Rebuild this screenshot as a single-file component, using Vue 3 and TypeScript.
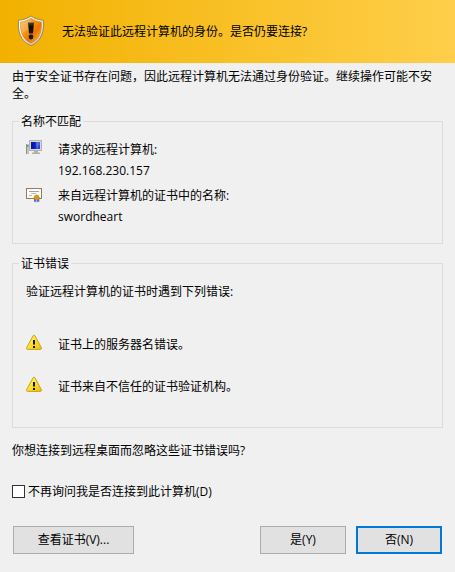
<script setup lang="ts">
import { ref } from 'vue'

const dontAskAgain = ref<boolean>(false)
const errors: string[] = ['证书上的服务器名错误。', '证书来自不信任的证书验证机构。']
</script>

<template>
  <main class="dialog" lang="zh-CN">
    <header class="banner">
      <svg class="shield" width="28" height="32" viewBox="0 0 28 32">
        <defs>
          <linearGradient id="rim" x1="0" y1="0" x2="1" y2="1">
            <stop offset="0" stop-color="#ffffff" />
            <stop offset="0.5" stop-color="#f0ede6" />
            <stop offset="1" stop-color="#c4bfb5" />
          </linearGradient>
          <linearGradient id="core" x1="0" y1="0" x2="1" y2="1">
            <stop offset="0" stop-color="#ffb94e" />
            <stop offset="0.45" stop-color="#f28c0c" />
            <stop offset="0.62" stop-color="#ea7400" />
            <stop offset="1" stop-color="#ffc13c" />
          </linearGradient>
          <linearGradient id="mark" x1="0" y1="0" x2="0" y2="1">
            <stop offset="0" stop-color="#4a463f" />
            <stop offset="0.4" stop-color="#0c0a07" />
            <stop offset="1" stop-color="#1c150c" />
          </linearGradient>
        </defs>
        <path d="M14 1C10.500 3.600 6.300 4.800 1.500 5.300C.8 15.500 2.500 25.500 14 30.600C25.500 25.500 27.200 15.500 26.500 5.300C21.700 4.800 17.500 3.600 14 1Z" fill="url(#rim)" stroke="#8d7546" stroke-width=".8" />
        <path d="M14 3.300C11 5.300 7.500 6.500 3.600 7C3.100 15.800 4.800 24.200 14 28.500C23.200 24.200 24.900 15.800 24.400 7C20.500 6.500 17 5.300 14 3.300Z" fill="url(#core)" stroke="#c98736" stroke-width=".5" />
        <path d="M4 7.300C7.800 6.800 11.200 5.800 14 3.900V15C10 15 7 16.500 5 19C4.200 15.500 3.900 11.500 4 7.300Z" fill="#fff" opacity=".18" />
        <path d="M11 7.500h6l-1 11h-4Z" fill="url(#mark)" />
        <circle cx="14" cy="22" r="2.400" fill="#1f1810" />
      </svg>
      <h1 class="title">无法验证此远程计算机的身份。是否仍要连接?</h1>
    </header>

    <p class="intro">由于安全证书存在问题，因此远程计算机无法通过身份验证。继续操作可能不安全。</p>

    <section class="group names">
      <h2 class="legend">名称不匹配</h2>
      <div class="entry">
        <svg class="icon" width="16" height="16" viewBox="0 0 16 16">
          <defs>
            <linearGradient id="screen" x1="0" y1="0" x2="1" y2="0">
              <stop offset="0" stop-color="#0a1399" />
              <stop offset="0.45" stop-color="#0b1cc8" />
              <stop offset="0.7" stop-color="#3f62e8" />
              <stop offset="1" stop-color="#1b35cf" />
            </linearGradient>
          </defs>
          <path d="M0 4.500L1 4h2v10H0Z" fill="#c4c4c4" />
          <path d="M0 4.500L1 4v10H0Z" fill="#8e8e8e" />
          <rect x="1" y="5" width="1.500" height="2" fill="#35c236" />
          <rect x="3.500" y=".5" width="12" height="10" fill="#d8d8d5" stroke="#b2b2af" />
          <rect x="5" y="2" width="9" height="7" fill="url(#screen)" />
          <path d="M10 2h4v3l-4 2Z" fill="#7894f3" opacity=".4" />
          <path d="M8 11h4v1.500h2V14H6v-1.500h2Z" fill="#b0b0ae" />
        </svg>
        <div class="details">
          <div class="label">请求的远程计算机:</div>
          <div class="value">192.168.230.157</div>
        </div>
      </div>
      <div class="entry">
        <svg class="icon" width="16" height="17" viewBox="0 0 16 17">
          <rect x=".5" y="2.500" width="15" height="10" fill="#fffefa" stroke="#9a7b55" />
          <path d="M3 5.500h10" stroke="#96a3c8" />
          <path d="M5 7.500h5M3 9.500h3" stroke="#b3bad0" />
          <path d="M8 11.500h2.300v5L9 15.500L8 16ZM11 11.500h2.300V16L12 15.500l-1 1Z" fill="#3876df" />
          <circle cx="10.600" cy="11.500" r="2.500" fill="#e4a51d" stroke="#b77b14" stroke-width=".7" />
          <circle cx="10.600" cy="11.500" r="1" fill="#c9860f" />
        </svg>
        <div class="details">
          <div class="label">来自远程计算机的证书中的名称:</div>
          <div class="value">swordheart</div>
        </div>
      </div>
    </section>

    <section class="group problems">
      <h2 class="legend">证书错误</h2>
      <p class="lead">验证远程计算机的证书时遇到下列错误:</p>
      <ul class="errors">
        <li v-for="message in errors" :key="message" class="error">
          <svg class="icon" width="16" height="16" viewBox="0 0 16 16">
            <defs>
              <linearGradient id="warn" x1="0" y1="0" x2="1" y2="1">
                <stop offset="0" stop-color="#fff48a" />
                <stop offset="0.5" stop-color="#fae22e" />
                <stop offset="1" stop-color="#eebb10" />
              </linearGradient>
            </defs>
            <path d="M7.200 1.600Q8 .7 8.800 1.600L15.400 13.700Q15.700 15.400 14.500 15.400H1.500Q.3 15.400 .6 13.700Z" fill="url(#warn)" stroke="#c9a11a" stroke-width="1" />
            <path d="M7 6h2v4.500H7ZM7 12h2v2H7Z" fill="#1a1700" />
          </svg>
          <span>{{ message }}</span>
        </li>
      </ul>
    </section>

    <p class="question">你想连接到远程桌面而忽略这些证书错误吗?</p>

    <label class="remember">
      <input v-model="dontAskAgain" class="box" type="checkbox" />
      <span>不再询问我是否连接到此计算机(D)</span>
    </label>

    <footer class="actions">
      <button class="btn view" type="button">查看证书(V)...</button>
      <button class="btn" type="button">是(Y)</button>
      <button class="btn primary" type="button">否(N)</button>
    </footer>
  </main>
</template>

<style>
body {
  margin: 0;
  background: #f0f0f0;
}
</style>

<style scoped>
.dialog {
  box-sizing: border-box;
  width: 455px;
  height: 572px;
  overflow: hidden;
  background: #f0f0f0;
  color: #000;
  font-family: "Open Sans", "Noto Sans CJK SC", sans-serif;
  font-size: 12px;
  line-height: 18px;
}

h1,
h2,
p,
ul {
  margin: 0;
  padding: 0;
  font-size: inherit;
  font-weight: 400;
  list-style: none;
}

svg {
  display: block;
  flex: none;
}

.banner {
  display: flex;
  align-items: center;
  gap: 14px;
  box-sizing: border-box;
  height: 63px;
  padding: 0 0 2px 17px;
  background: linear-gradient(90deg, #f2b100, #ffcf4b);
}

.title {
  margin-left: 3px;
  padding-top: 2px;
}

.intro {
  padding: 5px 12px 0;
  line-height: 17px;
}

.group {
  box-sizing: border-box;
  margin: 0 12px;
  border: 1px solid #dcdcdc;
}

.legend {
  width: max-content;
  height: 18px;
  margin: -9px 0 0 6px;
  padding: 0 2px;
  background: #f0f0f0;
}

.names {
  height: 123px;
  margin-top: 19px;
}

.entry {
  display: flex;
  gap: 16px;
  height: 46px;
  padding-left: 13px;
}

.names .legend {
  margin-bottom: 9px;
}

.details {
  padding-top: 1px;
}

.label {
  height: 21px;
}

.problems {
  height: 165px;
  margin-top: 19px;
}

.lead {
  padding: 10px 13px 0;
}

.errors {
  padding: 33px 13px 0;
}

.error {
  display: flex;
  gap: 16px;
  height: 42px;
}

.error span {
  padding-top: 2px;
}

.question {
  padding: 14px 12px 0;
}

.remember {
  display: flex;
  align-items: center;
  gap: 3px;
  margin: 22px 12px 0;
  height: 20px;
}

.box {
  appearance: none;
  box-sizing: border-box;
  width: 13px;
  height: 13px;
  margin: 0 0 2px;
  border: 1px solid #333;
  background: #fff;
}

.box:checked {
  box-shadow: inset 0 0 0 2px #fff;
  background: #333;
}

.actions {
  display: flex;
  gap: 10px;
  padding: 24px 13px 0;
}

.btn {
  box-sizing: border-box;
  width: 86px;
  height: 28px;
  padding: 0;
  border: 1px solid #adadad;
  border-radius: 0;
  background: #e1e1e1;
  color: #000;
  font: inherit;
}

.view {
  width: 121px;
  margin-right: auto;
}

.primary {
  border: 2px solid #0078d7;
}
</style>
